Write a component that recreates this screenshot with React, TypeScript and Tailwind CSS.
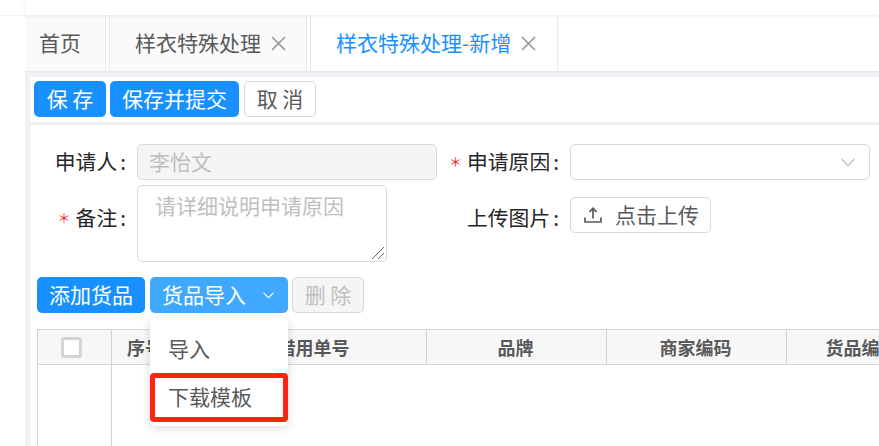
const font = { fontFamily: '"Noto Sans CJK SC", "Liberation Sans", sans-serif' };

function CloseIcon() {
  return (
    <svg className="ml-[10px] shrink-0" width="15" height="15" viewBox="0 0 15 15" fill="none" stroke="#999" strokeWidth="1.7">
      <path d="M1 1 14 14M14 1 1 14" />
    </svg>
  );
}

function Chevron({ w, color }: { w: number; color: string }) {
  return (
    <svg width={w} height={w * 0.6} viewBox="0 0 14 8.4" fill="none" stroke={color} strokeWidth="1.4">
      <path d="M.6.8 7 7.6 13.4.8" />
    </svg>
  );
}

function Tab({ label, active, closable, className }: { label: string; active?: boolean; closable?: boolean; className: string }) {
  return (
    <div className={`${className} ${active ? "bg-white text-[#1890ff]" : "bg-[#fafafa] text-[#595959]"} h-14 border-r border-[#e8e8e8] flex items-center text-[21px]`}>
      <span>{label}</span>
      {closable && <CloseIcon />}
    </div>
  );
}

function Btn({ children, className }: { children: React.ReactNode; className: string }) {
  return <button className={`h-9 rounded-[5px] flex items-center justify-center text-[21px] ${className}`}>{children}</button>;
}

function Label({ children, required, className }: { children: React.ReactNode; required?: boolean; className: string }) {
  return (
    <div className={`flex items-center justify-end text-[20.8px] text-[#262626] ${className}`}>
      {required && <span className="text-[#f5222d] mr-[5px] text-[13px]">＊</span>}
      {children}
      <span className="ml-[3px] mr-[11px]">:</span>
    </div>
  );
}

function Th({ children, className }: { children?: React.ReactNode; className: string }) {
  return <div className={`h-full shrink-0 border-r border-[#d4d4d4] flex items-center justify-center ${className}`}>{children}</div>;
}

export default function App() {
  return (
    <div style={font} className="relative w-[879px] h-[446px] overflow-hidden bg-white flex">
      <div className="w-[25px] shrink-0">
        <div className="h-4 border-b border-[#f0f0f0]" />
      </div>
      <div className="w-[854px] shrink-0 bg-[#eef0f4]">
        <div className="h-[15px] bg-white shadow-[0_1px_4px_rgba(0,0,0,0.08)] relative" />
        <div className="h-[57px] bg-white border-b border-[#e8e8e8] flex gap-[3px]">
          <Tab label="首页" className="w-[81px] pl-[14px]" />
          <Tab label="样衣特殊处理" className="w-[198px] pl-[25px] border-l" closable />
          <Tab label="样衣特殊处理-新增" className="w-[248px] pl-[25px] border-l" active closable />
        </div>
        <div className="ml-[5px] mt-[5px] h-[45px] bg-white flex items-start pt-[4px] gap-[4px] pl-[4px]">
          <Btn className="w-[72px] bg-[#1890ff] text-white">保 存</Btn>
          <Btn className="w-[129px] bg-[#1890ff] text-white">保存并提交</Btn>
          <Btn className="w-[72px] ml-[1px] bg-white border border-[#d9d9d9] text-[#595959]">取 消</Btn>
        </div>
        <div className="ml-[5px] mt-[3px] h-[321px] bg-white pl-[7px] pt-[19px]">
          <div className="flex h-9">
            <Label className="w-[100px] h-9">申请人</Label>
            <div className="w-[300px] h-9 rounded-[5px] border border-[#d9d9d9] bg-[#f5f5f5] text-[#bfbfbf] text-[21px] flex items-center pl-[11px]">李怡文</div>
            <Label required className="w-[133px] h-9">申请原因</Label>
            <div className="w-[300px] h-9 rounded-[5px] border border-[#d9d9d9] bg-white flex items-center justify-end pr-[14px]">
              <Chevron w={14} color="#c4c4c4" />
            </div>
          </div>
          <div className="flex mt-[5px] h-[77px]">
            <Label required className="w-[100px] h-[66px]">备注</Label>
            <div className="relative w-[250px] h-[77px] rounded-[5px] border border-[#d9d9d9] text-[#bfbfbf] text-[21px] pl-[17px] pt-[4px]">
              请详细说明申请原因
              <svg className="absolute right-[1px] bottom-[1px]" width="14" height="14" viewBox="0 0 14 14" fill="none" stroke="#666" strokeWidth="1">
                <path d="M1 13 13 1M7 13 13 7" />
              </svg>
            </div>
            <Label className="w-[183px] h-[66px]">上传图片</Label>
            <div className="mt-3 w-[141px] h-9 rounded-[5px] border border-[#d9d9d9] text-[#595959] text-[21px] flex items-center pl-[13px] gap-[13px]">
              <svg width="18" height="18" viewBox="0 0 18 18" fill="none" stroke="#595959" strokeWidth="1.7">
                <path d="M1 11.5V16H17V11.5M9 12.5V2.5M5.5 5.8 9 2.2 12.5 5.8" />
              </svg>
              点击上传
            </div>
          </div>
          <div className="flex mt-[15px] gap-[5px]">
            <Btn className="w-[108px] bg-[#1890ff] text-white">添加货品</Btn>
            <Btn className="w-[138px] bg-[#40a9ff] text-white justify-start pl-[12px] gap-[17px]">
              货品导入
              <Chevron w={11} color="#ffffff" />
            </Btn>
            <Btn className="w-[72px] -ml-[1px] bg-[#f5f5f5] border border-[#d9d9d9] text-[#bfbfbf]">删 除</Btn>
          </div>
          <div className="mt-4 w-[900px] h-[36px] bg-[#f7f7f7] border-y border-l border-[#d4d4d4] flex text-[18px] font-bold text-[#595959]">
            <Th className="w-[74px] pr-[7px]">
              <span className="size-[21px] rounded-[3px] border-[3px] border-[#d4d4d4] bg-white" />
            </Th>
            <Th className="w-[89px] justify-start pl-[15px]">序号</Th>
            <Th className="w-[226px]">借用单号</Th>
            <Th className="w-[180px] pr-[2px]">品牌</Th>
            <Th className="w-[180px] pr-[2px]">商家编码</Th>
            <Th className="w-[150px]">货品编码</Th>
          </div>
          <div className="w-[75px] h-[82px] border-x border-[#d4d4d4]" />
        </div>
      </div>
      <div className="absolute left-[150px] top-[318px] w-[138px] h-[108px] rounded-[5px] bg-white shadow-[0_2px_10px_rgba(0,0,0,0.15)] text-[21px] text-[#595959] pl-[18px] pt-[14px]">
        <div className="h-[32px] leading-[32px]">导入</div>
        <div className="mt-[16px] h-[32px] leading-[32px]">下载模板</div>
      </div>
      <div className="absolute left-[150px] top-[373px] w-[138px] h-[49px] rounded-[4px] border-[5px] border-[#ff2312]" />
    </div>
  );
}
